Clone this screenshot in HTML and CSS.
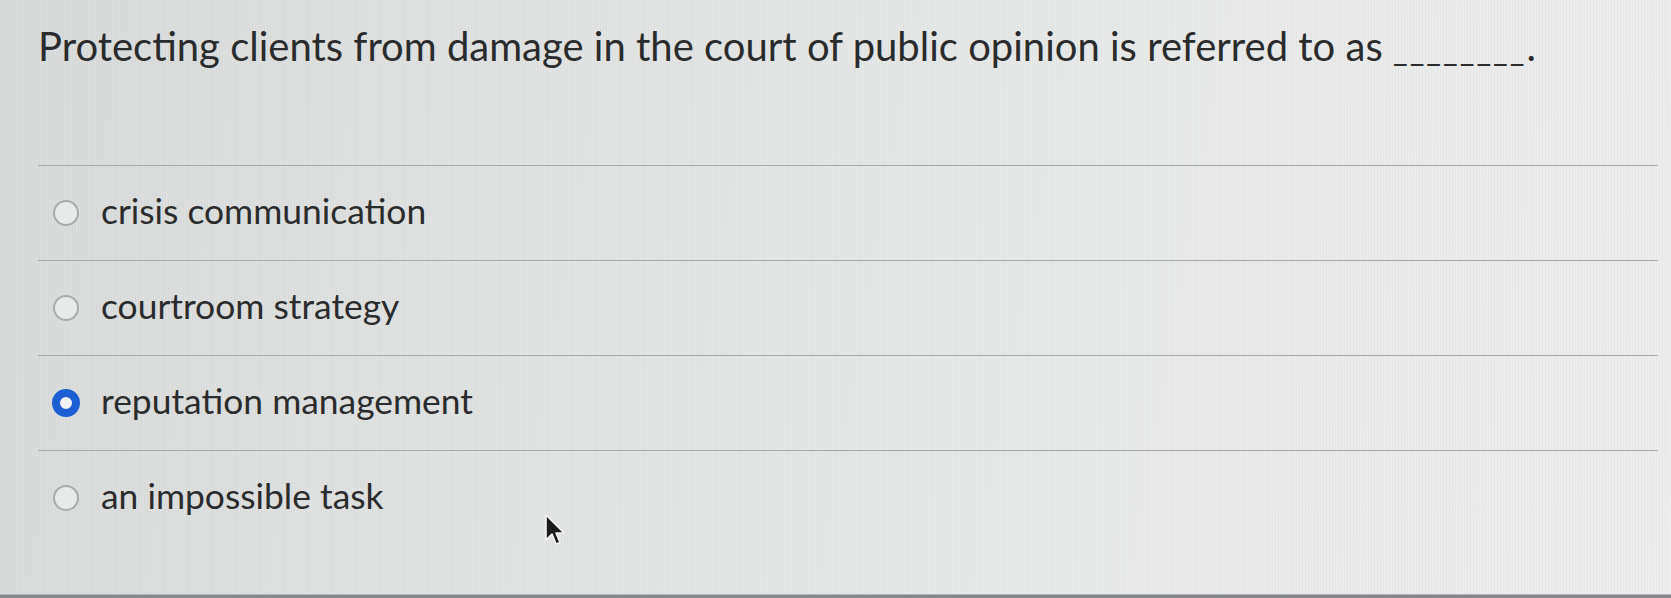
FILE: index.html
```html
<!DOCTYPE html>
<html>
<head>
<meta charset="utf-8">
<link rel="stylesheet" href="styles.css">
</head>
<body>
<div class="screen">
  <div class="question">
    <p class="prompt">Protecting clients from damage in the court of public opinion is referred to as <span class="blank">________</span>.</p>
    <div class="options">
      <label class="option"><span class="radio"></span><span class="label">crisis communication</span></label>
      <label class="option"><span class="radio"></span><span class="label">courtroom strategy</span></label>
      <label class="option"><span class="radio checked"></span><span class="label">reputation management</span></label>
      <label class="option"><span class="radio"></span><span class="label">an impossible task</span></label>
    </div>
  </div>
  <div class="bezel"></div>
  <svg class="cursor" width="22" height="36" viewBox="0 0 22 36">
    <path d="M2 2 L2 27 L8 21 L12 31 L16 29.5 L12 20 L20 20 Z" fill="#1c1a1c" stroke="#f4f4f4" stroke-width="1.6" stroke-linejoin="round"/>
  </svg>
</div>
</body>
</html>
```
FILE: styles.css
```css
html, body {
  margin: 0;
  padding: 0;
}
body {
  width: 1671px;
  height: 598px;
  overflow: hidden;
  font-family: Lato, "Noto Sans", sans-serif;
  color: #2a2b2c;
}
.screen {
  position: relative;
  width: 1671px;
  height: 598px;
  display: flex;
  flex-direction: column;
  background:
    repeating-linear-gradient(90deg, rgba(0,0,0,0.025) 0 1px, rgba(255,255,255,0) 1px 3px),
    linear-gradient(100deg, #d9dbda 0%, #e2e4e3 35%, #e9ebea 70%, #ecedec 100%);
}
.question {
  flex: 1;
  padding: 22px 13px 0 38px;
}
.prompt {
  margin: 0;
  font-size: 40px;
  line-height: 48px;
  height: 48px;
  white-space: nowrap;
  letter-spacing: 0;
}
.blank {
  margin-left: 0;
  font-size: 32px;
  letter-spacing: 2px;
}
.options {
  margin-top: 95px;
  display: flex;
  flex-direction: column;
}
.option {
  display: flex;
  align-items: center;
  gap: 22px;
  height: 94px;
  padding-left: 15px;
  border-top: 1.5px solid #a7a9a8;
}
.radio {
  width: 26px;
  height: 26px;
  border: 2px solid #a9abaa;
  border-radius: 50%;
  box-sizing: border-box;
  flex: none;
  background: #e8eae9;
}
.radio.checked {
  width: 28px;
  height: 28px;
  margin-left: -1px;
  margin-right: -1px;
  border: 8px solid #1d5fd2;
  background: #f2f3f3;
}
.label {
  font-size: 35.4px;
  line-height: 42px;
  margin-top: -4px;
}
.bezel {
  height: 3px;
  background: #85878a;
  border-top: 1px solid #b5b7b6;
}
.cursor {
  position: absolute;
  left: 544px;
  top: 513px;
}
```
